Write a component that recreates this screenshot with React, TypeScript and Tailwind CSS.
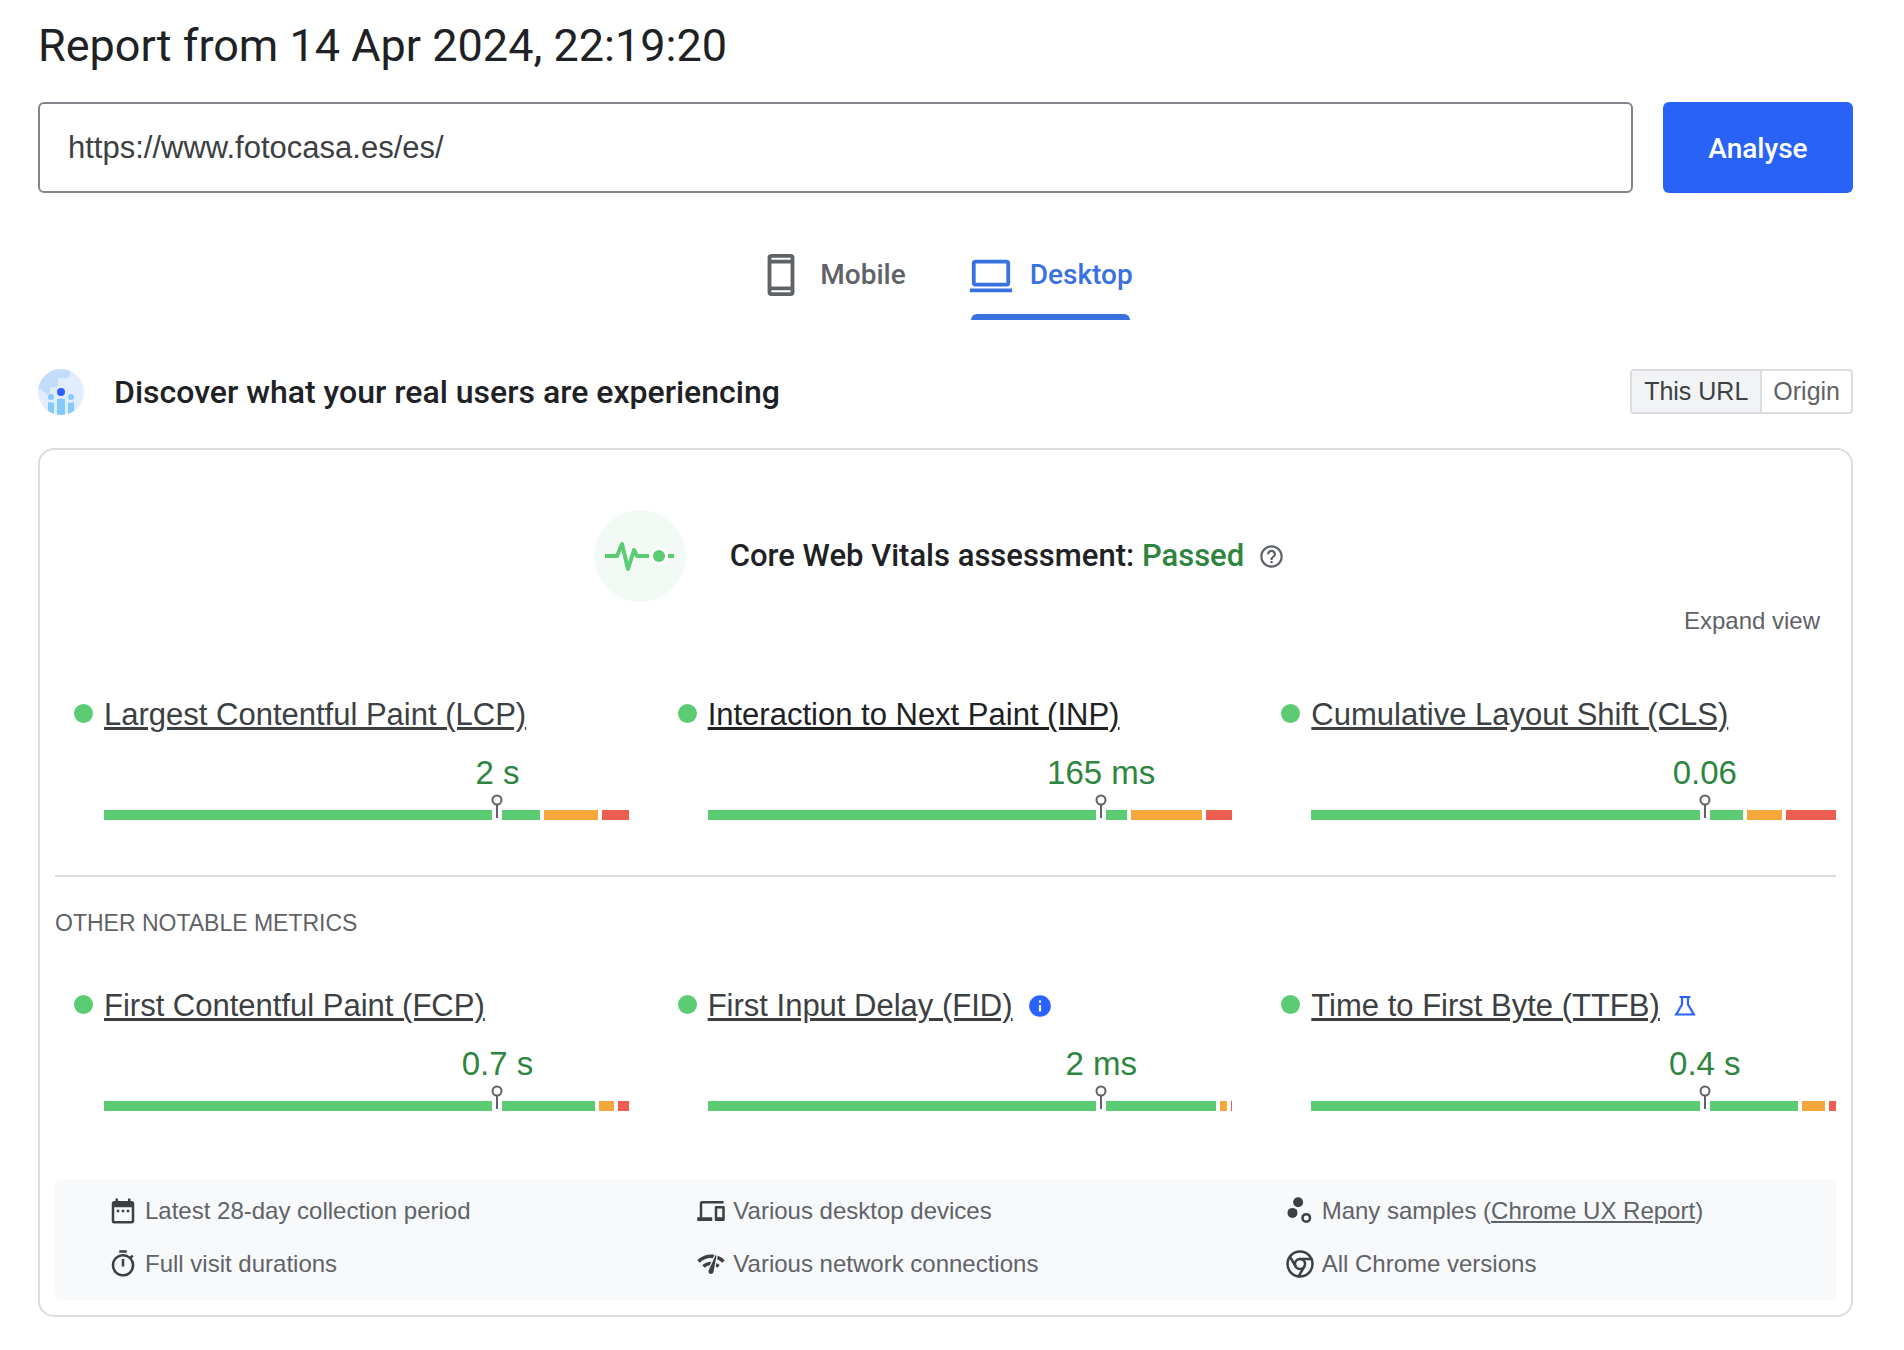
import type { ReactNode } from "react";
import { Chrome } from "lucide-react";
import { MdDateRange, MdHelpOutline, MdInfo, MdNetworkCheck, MdOutlineTimer } from "react-icons/md";

type Metric = {
  name: string;
  value: string;
  good: number;
  average: number;
  poor: number;
  active?: boolean;
  badge?: ReactNode;
};

const FlaskIcon = () => (
  <svg viewBox="0 0 22 22" className="size-[22px]" fill="none" stroke="#2962ff" strokeWidth="2.200">
    <path d="M5.500 2h11M8 2v7.500L2.200 19.500h17.600L14 9.500V2" />
  </svg>
);

const coreMetrics: Metric[] = [
  { name: "Largest Contentful Paint (LCP)", value: "2 s", good: 84.4, average: 10.4, poor: 5.2 },
  { name: "Interaction to Next Paint (INP)", value: "165 ms", good: 81.1, average: 13.9, poor: 5 },
  { name: "Cumulative Layout Shift (CLS)", value: "0.06", good: 83.5, average: 6.8, poor: 9.7 },
];
coreMetrics[1].active = true;

const otherMetrics: Metric[] = [
  { name: "First Contentful Paint (FCP)", value: "0.7 s", good: 95, average: 2.9, poor: 2.1 },
  {
    name: "First Input Delay (FID)",
    value: "2 ms",
    good: 98.4,
    average: 1.3,
    poor: 0.3,
    badge: <MdInfo className="size-[26px] text-[#2962ff]" />,
  },
  {
    name: "Time to First Byte (TTFB)",
    value: "0.4 s",
    good: 94.1,
    average: 4.5,
    poor: 1.4,
    badge: <FlaskIcon />,
  },
];

const PhoneIcon = () => (
  <svg viewBox="0 0 24 24" className="size-[46px]" fill="currentColor">
    <path
      fillRule="evenodd"
      d="M7 1h10a2 2 0 0 1 2 2v18a2 2 0 0 1-2 2H7a2 2 0 0 1-2-2V3a2 2 0 0 1 2-2zm0 2v1h10V3zm0 3v12h10V6zm0 14v1h10v-1z"
    />
  </svg>
);

const LaptopIcon = () => (
  <svg viewBox="0 0 24 24" className="size-[46px]" fill="currentColor">
    <path
      fillRule="evenodd"
      d="M4 4h16a2 2 0 0 1 2 2v10a2 2 0 0 1-2 2H4a2 2 0 0 1-2-2V6a2 2 0 0 1 2-2zm0 2v10h16V6zM1 19h22v2H1z"
    />
  </svg>
);

const UsersIcon = () => (
  <svg viewBox="0 0 46 46" className="size-[46px]">
    <defs>
      <clipPath id="globe">
        <circle cx="23" cy="23" r="23" />
      </clipPath>
    </defs>
    <g clipPath="url(#globe)">
      <rect width="46" height="46" fill="#e1edfe" />
      <path
        d="M0 0h32v5a4 4 0 0 1-4 4h-8v6a3 3 0 0 1-3 3h-5v6l-3 2-7-6H0z"
        fill="#c2dcfc"
      />
      <circle cx="23" cy="23" r="4" fill="#2962ff" />
      <g fill="#84cafb">
        <circle cx="13" cy="28" r="3" />
        <circle cx="33" cy="28" r="3" />
        <path d="M10 33l6 1v12h-6zM19 30q4-1 8 0v16h-8zM30 34l6-1v13h-6z" />
      </g>
    </g>
  </svg>
);

const PulseIcon = () => (
  <svg viewBox="0 0 92 92" className="size-[92px]" fill="none">
    <circle cx="46" cy="46" r="46" fill="#f3faf5" />
    <path
      d="M11 46h12l5-12 6 25 6-19 3 6h12M74 46h6"
      stroke="#5bcb74"
      strokeWidth="4"
      strokeLinejoin="round"
    />
    <circle cx="65" cy="46" r="9" fill="#fff" />
    <circle cx="65" cy="46" r="6" fill="#5bcb74" />
  </svg>
);

const DevicesIcon = () => (
  <svg viewBox="0 0 24 24" className="size-[30px]" fill="currentColor">
    <path d="M5 6h17V4H5a2 2 0 0 0-2 2v11H1v3h12v-3H5z" />
    <path fillRule="evenodd" d="M16 8h6a1 1 0 0 1 1 1v10a1 1 0 0 1-1 1h-6a1 1 0 0 1-1-1V9a1 1 0 0 1 1-1zm1 2v7h4v-7z" />
  </svg>
);

const SamplesIcon = () => (
  <svg viewBox="0 0 24 24" className="size-[30px]" fill="currentColor">
    <circle cx="10.500" cy="5" r="4" />
    <circle cx="6" cy="13.500" r="4" />
    <circle cx="17" cy="17.500" r="3" fill="none" stroke="currentColor" strokeWidth="2" />
  </svg>
);

const Gauge = ({ good, average, poor }: Pick<Metric, "good" | "average" | "poor">) => (
  <div className="relative flex h-7 items-end gap-1">
    <div className="h-2.5 bg-[#5bcb74]" style={{ flexGrow: good }} />
    <div className="h-2.5 bg-[#f4a83b]" style={{ flexGrow: average }} />
    <div className="h-2.5 bg-[#ec5e4f]" style={{ flexGrow: poor }} />
    <div className="absolute bottom-0 left-3/4 h-2.5 w-2.5 -translate-x-1/2 bg-white" />
    <svg
      viewBox="0 0 12 24"
      className="absolute bottom-0.5 left-3/4 h-6 w-3 -translate-x-1/2"
      fill="#fff"
      stroke="#5f6368"
      strokeWidth="2"
    >
      <path d="M6 10v14" />
      <circle cx="6" cy="6" r="4.500" />
    </svg>
  </div>
);

const MetricCell = ({ metric }: { metric: Metric }) => (
  <div className="pl-[49px]">
    <div className="-ml-[30px] flex h-9 items-center">
      <span className="mr-[11px] mb-1 size-[19px] rounded-full bg-[#5bcb74]" />
      <a
        href="#"
        className={
          metric.active
            ? "text-[31px] leading-9 text-[#202124] underline"
            : "text-[31px] leading-9 text-[#3c4043] underline"
        }
      >
        {metric.name}
      </a>
      {metric.badge && <span className="ml-3.5">{metric.badge}</span>}
    </div>
    <div className="mt-[21px] flex">
      <div className="flex w-3/4 justify-end">
        <span className="translate-x-1/2 text-[33px] leading-[38px] whitespace-nowrap text-[#2e8540]">
          {metric.value}
        </span>
      </div>
    </div>
    <Gauge good={metric.good} average={metric.average} poor={metric.poor} />
  </div>
);

const Info = ({ icon, children }: { icon: ReactNode; children: ReactNode }) => (
  <li className="flex items-center gap-[7px] pl-[45px] text-[#3c4043]">
    {icon}
    <span className="text-[24px] leading-[30px] text-[#5f6368]">{children}</span>
  </li>
);

export default function App() {
  return (
    <main className="bg-white pt-4 pr-[51px] pb-[34px] pl-[38px] font-['Liberation_Sans',Arial,sans-serif] text-[#202124]">
      <h1 className="font-[Roboto,sans-serif] text-[45px] leading-[60px]">
        Report from 14 Apr 2024, 22:19:20
      </h1>

      <form className="mt-[26px] flex gap-[30px]" onSubmit={(e) => e.preventDefault()}>
        <input
          type="text"
          aria-label="Web page URL"
          defaultValue="https://www.fotocasa.es/es/"
          className="h-[91px] min-w-0 flex-1 rounded-md border-2 border-[#80868b] px-7 text-[31px] text-[#3c4043] outline-none"
        />
        <button
          type="submit"
          className="w-[190px] rounded-md bg-[#2962f6] pt-0.5 font-[Roboto,sans-serif] text-[28px] font-medium text-white"
        >
          Analyse
        </button>
      </form>

      <div role="tablist" className="mt-[42px] flex justify-center gap-[62px] font-[Roboto,sans-serif] text-[28px] font-medium">
        <button role="tab" aria-selected="false" className="flex h-[85px] items-center gap-4 pb-1.5 text-[#5f6368]">
          <PhoneIcon />
          Mobile
        </button>
        <button role="tab" aria-selected="true" className="relative flex h-[85px] items-center gap-4 pb-1.5 text-[#3871e0]">
          <LaptopIcon />
          Desktop
          <span className="absolute inset-x-[3px] bottom-0 h-1.5 rounded-t-md bg-[#3871e0]" />
        </button>
      </div>

      <div className="mt-[49px] flex h-[45px] items-center">
        <UsersIcon />
        <h2 className="ml-[30px] font-[Roboto,sans-serif] text-[32px] font-medium">
          Discover what your real users are experiencing
        </h2>
        <div className="ml-auto flex h-full rounded-sm border-2 border-[#dadce0] text-[25px]">
          <button className="border-r-2 border-[#dadce0] bg-[#f1f3f4] px-3 text-[#3c4043]">This URL</button>
          <button className="px-[11px] text-[#5f6368]">Origin</button>
        </div>
      </div>

      <section className="mt-[34px] rounded-2xl border-2 border-[#dadce0] px-[15px] pb-[15px]">
        <div className="flex items-center justify-center pt-[60px] pr-3">
          <PulseIcon />
          <h3 className="ml-11 font-[Roboto,sans-serif] text-[31px] font-medium">
            Core Web Vitals assessment: <span className="text-[#2e8540]">Passed</span>
          </h3>
          <button aria-label="Help" className="ml-3.5 text-[#5f6368]">
            <MdHelpOutline className="size-[27px]" />
          </button>
        </div>

        <div className="mt-[5px] flex justify-end pr-4">
          <button className="text-[24px] leading-7 text-[#5f6368]">Expand view</button>
        </div>

        <div className="mt-[62px] grid grid-cols-3 gap-[30px]">
          {coreMetrics.map((m) => (
            <MetricCell key={m.name} metric={m} />
          ))}
        </div>

        <hr className="mt-[55px] border-t-2 border-[#dadce0]" />

        <h4 className="mt-8 text-[23px] leading-7 text-[#5f6368]">OTHER NOTABLE METRICS</h4>

        <div className="mt-[51px] grid grid-cols-3 gap-[30px]">
          {otherMetrics.map((m) => (
            <MetricCell key={m.name} metric={m} />
          ))}
        </div>

        <ul className="mt-[68px] grid grid-cols-3 gap-y-[23px] rounded-md bg-[#f8f9fb] px-2 pt-[17px] pb-[21px]">
          <Info icon={<MdDateRange className="size-[30px]" />}>Latest 28-day collection period</Info>
          <Info icon={<DevicesIcon />}>Various desktop devices</Info>
          <Info icon={<SamplesIcon />}>
            Many samples (
            <a href="#" className="underline">
              Chrome UX Report
            </a>
            )
          </Info>
          <Info icon={<MdOutlineTimer className="size-[30px]" />}>Full visit durations</Info>
          <Info icon={<MdNetworkCheck className="size-[30px]" />}>Various network connections</Info>
          <Info icon={<Chrome className="size-[30px]" />}>All Chrome versions</Info>
        </ul>
      </section>
    </main>
  );
}
